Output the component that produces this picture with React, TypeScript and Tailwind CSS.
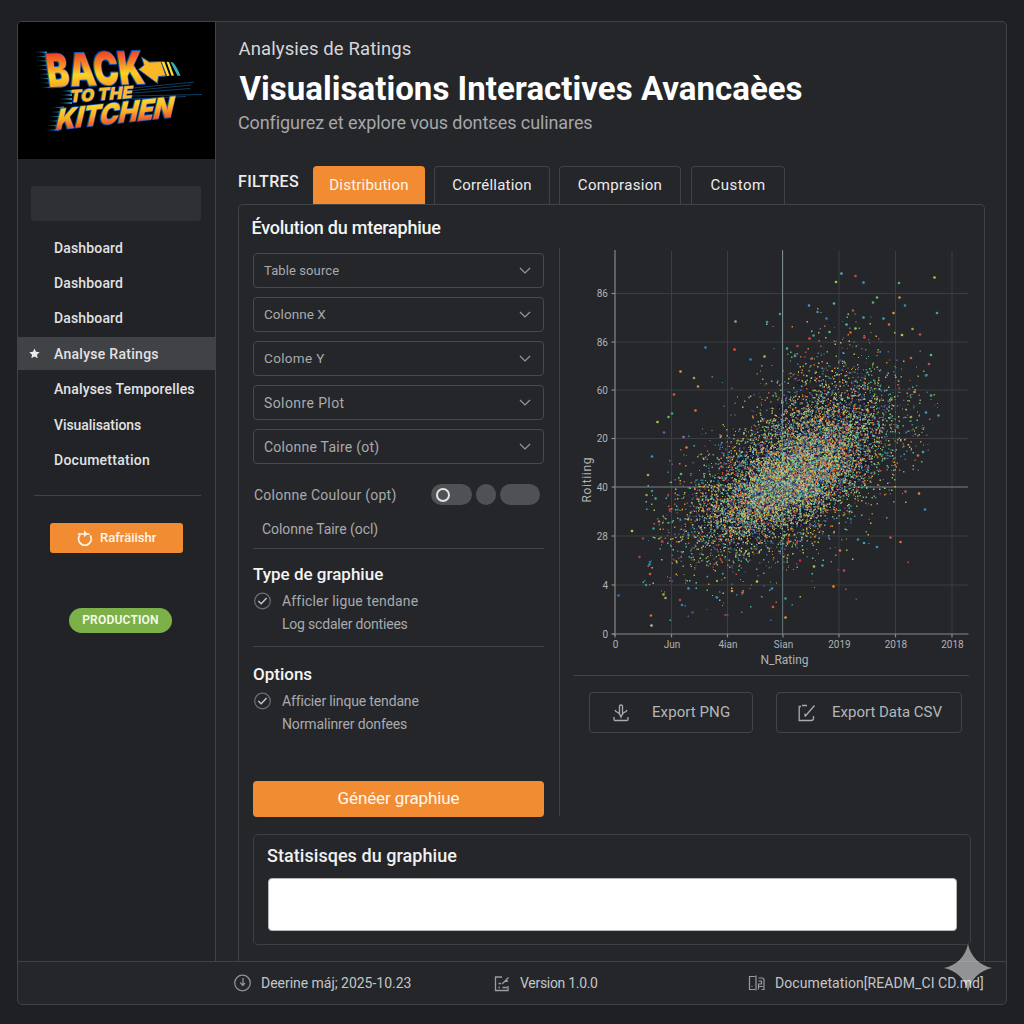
import type { ReactNode } from "react";

/* ---------- logo ---------- */

function Logo() {
  const leftLines = Array.from({ length: 9 }, (_, i) => i);
  return (
    <svg className="block h-[137px] w-[197px] bg-black" viewBox="18 22 197 137">
      <defs>
        <linearGradient id="fire" x1="0" y1="0" x2="0" y2="1">
          <stop offset="0.2" stopColor="#ee4427" />
          <stop offset="0.42" stopColor="#f98a23" />
          <stop offset="0.6" stopColor="#fdd326" />
          <stop offset="0.8" stopColor="#fba420" />
        </linearGradient>
        <linearGradient id="gold" x1="0" y1="0" x2="0" y2="1">
          <stop offset="0.2" stopColor="#fcd82c" />
          <stop offset="0.5" stopColor="#fbb024" />
          <stop offset="0.85" stopColor="#ee4a27" />
        </linearGradient>
        <linearGradient id="fade" x1="1" y1="0" x2="0" y2="0">
          <stop offset="0" stopColor="#2aa5cc" />
          <stop offset="1" stopColor="#0b4d80" stopOpacity="0.3" />
        </linearGradient>
      </defs>
      <g fill="url(#fade)">
        {leftLines.map((i) => (
          <path key={i} d={`M${33 + i * 0.9} ${52 + i * 4.4} L${47 + i * 0.7} ${51.4 + i * 4.4} L${47 + i * 0.7} ${53 + i * 4.4}z`} />
        ))}
        {leftLines.slice(0, 6).map((i) => (
          <path key={i} d={`M${51 - i * 1.3} ${107.5 + i * 4.5} L${64 - i} ${106.5 + i * 4.5} L${64 - i} ${108.5 + i * 4.5}z`} />
        ))}
        {leftLines.slice(0, 4).map((i) => (
          <path key={i} d={`M${60 - i} ${91 + i * 4} L72 ${90 + i * 4} L72 ${92 + i * 4}z`} />
        ))}
      </g>
      <g stroke="#134c78" strokeWidth="0.8">
        <path d="M133 88 L194 82 M133 90.500 L191 85 M133 93 L190 88.500 M131 96 L202 94.500 M131 99 L186 96.500" />
      </g>
      <g fontFamily="Inter, sans-serif" fontWeight="900" paintOrder="stroke" strokeLinejoin="round">
        <text x="0" y="0" fontSize="45" textLength="97" lengthAdjust="spacingAndGlyphs" fill="url(#fire)" stroke="#1157b8" strokeWidth="2.2" transform="matrix(1 -0.035 0.14 1 48.500 87)">
          BACK
        </text>
        <text x="0" y="0" fontSize="17" textLength="63" lengthAdjust="spacingAndGlyphs" fill="#fbb92b" stroke="#1157b8" strokeWidth="1.4" transform="matrix(1 -0.07 -0.16 1 69 102.500)">
          TO THE
        </text>
        <text x="0" y="0" fontSize="29" textLength="117" lengthAdjust="spacingAndGlyphs" fill="url(#gold)" stroke="#1157b8" strokeWidth="1.8" transform="matrix(1 -0.11 -0.24 1 54.500 130)">
          KITCHEN
        </text>
      </g>
      <path d="M141.500 57 L149.500 62 L161 61.500 L166 76 L158.500 76.500 L157.500 83.500 L138.500 69.500 L144 65z" fill="#fcb727" stroke="#1157b8" strokeWidth="1" />
      <path d="M161.500 61.500 L164.500 61.700 L169.500 75.800 L167 76z" fill="#fdd63a" />
      <path d="M166.500 61.800 L169 62 L174 75.600 L171.500 75.700z" fill="#fdd63a" />
      <path d="M170.500 62 L173 62.500 Q177 67 180.500 75.700 L177.500 75.700z" fill="#34b2bb" />
    </svg>
  );
}

/* ---------- scatter plot ---------- */

const PALETTE = [
  "#15122a", "#1a1726", "#3f9a92", "#59c0a0", "#8fc85a", "#e6c23f", "#ec9035",
  "#dc5a3f", "#4a76c0", "#7a5590", "#b5d48a", "#2f7f9f", "#ea6a3c", "#6fd0b4", "#c9d45a", "#24305e",
];

function makeRandom(seed: number) {
  let s = seed;
  return () => {
    s = (s + 0x6d2b79f5) | 0;
    let t = Math.imul(s ^ (s >>> 15), 1 | s);
    t = (t + Math.imul(t ^ (t >>> 7), 61 | t)) ^ t;
    return ((t ^ (t >>> 14)) >>> 0) / 4294967296;
  };
}

function buildCloud() {
  const rnd = makeRandom(20251023);
  const gauss = () => Math.sqrt(-2 * Math.log(rnd() + 1e-9)) * Math.cos(2 * Math.PI * rnd());
  const paths = PALETTE.map(() => "");
  let dark = "";
  // cx, cy, long-axis sigma, short-axis sigma, angle (deg), count
  const clusters = [
    [788, 477, 55, 26, -32, 8200],
    [783, 484, 34, 15, -28, 2400],
    [818, 434, 36, 30, -50, 2100],
    [786, 474, 64, 40, -40, 800],
    [845, 375, 30, 32, -45, 240],
  ];
  clusters.forEach(([cx, cy, a, b, deg, n], ci) => {
    const c = Math.cos((deg * Math.PI) / 180);
    const s = Math.sin((deg * Math.PI) / 180);
    for (let i = 0; i < n; i++) {
      const u = gauss() * a;
      const v = gauss() * b;
      const x = Math.round((cx + u * c - v * s) * 2) / 2;
      const y = Math.round((cy + u * s + v * c) * 2) / 2;
      if (x < 640 || x > 938 || y < 305 || y > 620) continue;
      const core = (u * u) / (a * a) + (v * v) / (b * b) < 3.6;
      if (ci < 3 && core && i % 2 === 0) dark += `M${x - 1.5} ${y - 1.5}h4v4h-4z`;
      const size = rnd() < 0.3 ? 1 : 1.5;
      let k = Math.floor(rnd() * PALETTE.length);
      if (!core && k < 2) k += 3;
      paths[k] += `M${x} ${y}h${size}v${size}h-${size}z`;
    }
  });
  return { dark, paths };
}

const CLOUD = buildCloud();

const OUTLIERS: [number, number, string][] = [
  [841.500, 273.500, "#4fb8a5"], [855.500, 276, "#c24a55"], [836, 282, "#9bd13f"], [863.500, 282.500, "#3f9ac9"],
  [934.500, 277.500, "#a9cf3f"], [899, 283, "#4fae6a"], [899.500, 297.500, "#e0913a"], [877, 297.500, "#5bc07a"],
  [873, 302.500, "#4fb56a"], [834, 303.500, "#4fb8a5"], [809, 305.500, "#4f8fd0"], [817.500, 312, "#4f80c0"],
  [853, 310.500, "#a8555f"], [905, 305.500, "#3a8fae"], [893.500, 313, "#d6993a"], [937, 313, "#45a09a"],
  [780, 314, "#3f8fc0"], [767, 322, "#2f8fc0"], [735.500, 321.500, "#6fc088"], [826.500, 318.500, "#2f80c0"],
  [863.500, 317.500, "#3aa5c0"], [883.500, 318.500, "#3aa5b0"], [846.500, 324.500, "#3fc09a"], [889, 324.500, "#e0663c"],
  [705.500, 347.500, "#2f80c8"], [734.500, 349.500, "#ee5a3c"], [764.500, 356.500, "#8ccf4a"], [750.500, 359.500, "#2f80c8"],
  [680.500, 371.500, "#ee9a2c"], [694, 378, "#6fc03f"], [698, 386.500, "#d6893a"], [674, 394.500, "#dd5a3a"],
  [672, 413.500, "#2fb86a"], [668.500, 417, "#5fc04a"], [657.500, 422, "#a9cf3f"], [695.500, 410.500, "#e0763c"],
  [664, 432.500, "#4a6fa0"], [683.500, 437, "#a05fd0"], [686.500, 447.500, "#e0763c"], [652, 456.500, "#3a90c0"],
  [648, 475, "#c09a5a"], [681, 474, "#3fc07a"], [809.500, 338.500, "#ee4a3c"], [813.500, 335.500, "#2fa0b0"],
  [829.500, 332, "#4fb87a"], [850.500, 332.500, "#ee5a3c"], [864.500, 337.500, "#d0454a"], [855.500, 328.500, "#8ccf4a"],
  [787, 348.500, "#2fb8a0"], [797.500, 346, "#b8404a"], [795, 356, "#3a9fb0"], [812, 358.500, "#e0553c"],
  [912.500, 329, "#a9a03f"], [920, 334.500, "#c0505a"], [902, 335, "#d0c03a"], [931, 355, "#3fc09a"],
  [911, 358, "#d0554a"], [929, 364, "#c0555a"], [926, 375.500, "#3a8fae"], [931, 395.500, "#3fb08a"],
  [914.500, 392, "#e0913a"], [926, 412.500, "#3a9fc0"], [938.500, 415.500, "#3aa08a"], [911, 417, "#a0a03f"],
  [923, 452, "#3a9fc0"], [918, 455.500, "#d0703a"], [919, 493.500, "#ee8a2c"], [925, 509.500, "#2f8fd0"],
  [905.500, 491.500, "#c0555a"], [900.500, 542, "#ee6a2c"], [890.500, 537.500, "#d0553a"], [877, 547, "#2f90b8"],
  [864, 543, "#3aa5b0"], [858, 539.500, "#3a90b0"], [840, 550.500, "#e0703a"], [844, 570.500, "#d0405a"],
  [833.500, 586.500, "#f08a2c"], [785.500, 598.500, "#2fa0a0"], [785.500, 617.500, "#ee9a2c"], [772, 588.500, "#2f8fd0"],
  [773, 607, "#e0553c"], [742.500, 592.500, "#e0663c"], [732, 591, "#ee8a2c"], [757, 581.500, "#b8d03f"],
  [717, 597.500, "#2f8fd0"], [688.500, 588.500, "#3a90c0"], [682, 605, "#2f80d0"], [692.500, 612.500, "#205fa0"],
  [680, 600, "#c04050"], [725.500, 615, "#a03a45"], [663.500, 594.500, "#a0b04a"], [665.500, 598, "#b0a05a"],
  [651, 615.500, "#e0663c"], [651.500, 625.500, "#c0c09a"], [646, 585, "#2f9a8a"], [618.500, 595.500, "#2f70c0"],
  [650, 574, "#d0505a"], [649.500, 564.500, "#2f8fd0"], [650, 562, "#2f70b0"], [639.500, 557, "#a0455a"],
  [632, 531, "#b8d03f"], [643, 538.500, "#a0405a"], [653.500, 528.500, "#3a9a9a"], [659, 521.500, "#d0705a"],
  [662, 541.500, "#d0453a"], [646.500, 495, "#8fa03f"], [652, 491, "#2f8a9a"], [655.500, 498.500, "#5f9a8a"],
  [670, 509.500, "#d0404a"], [814, 566.500, "#c0c03a"], [822.500, 565.500, "#3fa09a"], [800, 560.500, "#e0204a"],
];

function ScatterChart() {
  const xs: [number, string][] = [[615, "0"], [671.500, "Jun"], [727.500, "4ian"], [783, "Sian"], [839, "2019"], [895.500, "2018"], [952, "2018"]];
  const ys: [number, string][] = [[293.500, "86"], [342, "86"], [390, "60"], [438.500, "20"], [487, "40"], [536, "28"], [585, "4"], [634, "0"]];
  return (
    <svg className="block h-[427px] w-[424px]" viewBox="560 248 424 427">
      <g stroke="#3b3d41" strokeWidth="1">
        {xs.slice(1).map(([x], i) => <line key={i} x1={x} x2={x} y1="251" y2="634" />)}
        {ys.slice(0, 7).map(([y], i) => <line key={i} x1="615" x2="968" y1={y} y2={y} />)}
      </g>
      <line x1="615" x2="968" y1="487" y2="487" stroke="#75787a" />
      <path d={CLOUD.dark} fill="#17152a" fillOpacity="0.55" />
      {CLOUD.paths.map((d, i) => <path key={i} d={d} fill={PALETTE[i]} fillOpacity="0.86" />)}
      <ellipse cx="784" cy="486" rx="42" ry="20" transform="rotate(-25 784 486)" fill="#a9d0a0" fillOpacity="0.08" />
      {OUTLIERS.map(([x, y, c], i) => <circle key={i} cx={x} cy={y} r="1.3" fill={c} />)}
      <line x1="782.500" x2="782.500" y1="250" y2="425" stroke="#7c898c" strokeWidth="1" />
      <line x1="782.500" x2="782.500" y1="545" y2="634" stroke="#5c6c70" strokeWidth="1" />
      <line x1="782.500" x2="782.500" y1="425" y2="545" stroke="#8fb8ae" strokeOpacity="0.3" strokeWidth="1" />
      <g stroke="#85878a" strokeWidth="1.2">
        <line x1="615" x2="615" y1="250" y2="636" />
        <line x1="612" x2="968.500" y1="634" y2="634" />
        {xs.map(([x], i) => <line key={i} x1={x} x2={x} y1="634" y2="637.500" />)}
        {ys.map(([y], i) => <line key={i} x1="611.500" x2="615" y1={y} y2={y} />)}
      </g>
      <g fill="#b0b2b5" fontFamily="Roboto, sans-serif" fontSize="10">
        {xs.map(([x, t], i) => <text key={i} x={x + 0.5} y="648" textAnchor="middle">{t}</text>)}
        {ys.map(([y, t], i) => <text key={i} x="608" y={y + 3.500} textAnchor="end">{t}</text>)}
        <text x="784.500" y="663.500" textAnchor="middle" fontSize="12">N_Rating</text>
        <text transform="translate(590.500 480) rotate(-90)" textAnchor="middle" fontSize="12" textLength="45">Roitiing</text>
      </g>
    </svg>
  );
}

/* ---------- small pieces ---------- */

function CheckIcon() {
  return (
    <svg className="h-[18px] w-[18px]" viewBox="0 0 18 18" fill="none">
      <circle cx="9.500" cy="9" r="7.800" stroke="#6c6e72" strokeWidth="1.2" />
      <path d="M5.300 9 L8.200 11.800 L13.600 6" stroke="#c3c4c6" strokeWidth="1.500" />
    </svg>
  );
}

function Select({ label, text }: { label: string; text: string }) {
  return (
    <div className="flex h-[35px] items-center justify-between rounded-[4px] border border-[#47494d] pr-[12px] pl-[10px]">
      <span className={`text-[#a8aaad] ${text}`}>{label}</span>
      <svg className="h-[7px] w-[12px]" viewBox="0 0 12 7" fill="none">
        <path d="M1 1 L6 6 L11 1" stroke="#97999c" strokeWidth="1.200" />
      </svg>
    </div>
  );
}

function CheckGroup({ title, first, second, secondCls }: { title: string; first: ReactNode; second: ReactNode; secondCls: string }) {
  return (
    <>
      <h3 className="h-6 text-[17px] leading-6 font-[550] text-[#f4f4f5]">{title}</h3>
      <div className="mt-[3px] flex h-6 items-center text-sm text-[#a8aaad]">
        <CheckIcon />
        <span className="pl-[11px]">{first}</span>
      </div>
      <div className={`h-5 pl-[29px] text-sm leading-5 text-[#a8aaad] ${secondCls}`}>{second}</div>
    </>
  );
}

const NAV = [
  { label: "Dashboard", cls: "tracking-[0.15px]" },
  { label: "Dashboard", cls: "tracking-[0.15px]" },
  { label: "Dashboard", cls: "tracking-[0.15px]" },
  { label: "Analyse Ratings", cls: "tracking-[0.28px]", active: true },
  { label: "Analyses Temporelles", cls: "tracking-[0.16px]" },
  { label: "Visualisations", cls: "tracking-[-0.08px]" },
  { label: "Documettation", cls: "tracking-[0.25px]" },
];

function Sidebar() {
  return (
    <aside className="flex w-[198px] flex-col border-r border-[#414347] bg-[#222327]">
      <Logo />
      <div className="mt-[27px] mr-[14px] ml-[13px] h-[35px] rounded-[3px] bg-[#2f3034]" />
      <nav className="mt-[9px] flex flex-col">
        {NAV.map((n, i) => (
          <div key={i} className="flex h-[35.400px] items-center">
            <div className={n.active ? "flex h-[33px] w-full items-center bg-[#414246]" : "flex h-[33px] w-full items-center"}>
              <span className="flex w-[36px] pl-[11px]">
                {n.active && (
                  <svg className="h-[11px] w-[11px]" viewBox="0 0 24 24" fill="#ececed">
                    <path d="M12 1l3.300 7.400 8 .8-6 5.400 1.700 7.900-7-4.100-7 4.100 1.700-7.900-6-5.400 8-.8z" />
                  </svg>
                )}
              </span>
              <span className={`text-sm font-medium text-[#e1e2e3] ${n.cls}`}>{n.label}</span>
            </div>
          </div>
        ))}
      </nav>
      <div className="mt-[17px] mr-[14px] ml-4 h-px bg-[#404246]" />
      <button className="mt-[27px] ml-[32px] flex h-[30px] w-[133px] items-center rounded-[3px] bg-[#f28c33] pl-[27px]">
        <svg className="h-4 w-4" viewBox="0 0 16 16" fill="none" stroke="#fff3e6" strokeWidth="1.900">
          <path d="M3 5 A6.300 6.300 0 1 0 13.200 5.500" />
          <path d="M0.800 4 H12.500" strokeWidth="1.600" />
          <path d="M7 0.300 L10.500 3.800 L7 7.300z" fill="#fff3e6" stroke="none" />
        </svg>
        <span className="pl-[7px] text-[13px] font-[550] text-[#fff6ec]">Rafräiishr</span>
      </button>
      <span className="mt-[55px] ml-[51px] flex h-[25px] w-[103px] items-center justify-center rounded-full bg-[#7cb14a] text-xs font-semibold tracking-[0.2px] text-[#f5fbea]">
        PRODUCTION
      </span>
    </aside>
  );
}

function Tabs() {
  const base = "flex h-[38px] items-center justify-center rounded-t-[4px] text-[15px] font-[450]";
  const idle = "border border-b-0 border-[#404246] pb-px text-[#ececed]";
  return (
    <div className="mt-[31px] flex h-[38px]">
      <span className="flex w-[75px] items-center pb-[6px] text-base font-[550] tracking-[0.35px] text-[#ececed]">FILTRES</span>
      <span className={`w-[112px] bg-[#f28c33] tracking-[0.2px] text-[#fff6ec] ${base}`}>Distribution</span>
      <span className={`ml-[9px] w-[116px] tracking-[0.2px] ${base} ${idle}`}>Corréllation</span>
      <span className={`ml-[9px] w-[122px] tracking-[0.33px] ${base} ${idle}`}>Comprasion</span>
      <span className={`ml-[10px] w-[94px] tracking-[0.5px] ${base} ${idle}`}>Custom</span>
    </div>
  );
}

function FilterForm() {
  return (
    <div className="w-[320px] pr-[15px] pl-[14px]">
      <h2 className="mt-[11px] -ml-[1.500px] h-6 text-lg leading-6 font-[550] tracking-[-0.250px] text-[#f4f4f5]">Évolution du mteraphiue</h2>
      <div className="mt-[13px] flex flex-col gap-[9px]">
        <Select label="Table source" text="text-[13px] tracking-[0.1px]" />
        <Select label="Colonne X" text="text-[13.500px] tracking-[0.050px]" />
        <Select label="Colome Y" text="text-[13.500px] tracking-[0.350px]" />
        <Select label="Solonre Plot" text="text-sm tracking-[0.400px]" />
        <Select label="Colonne Taire (ot)" text="text-sm tracking-[0.25px]" />
      </div>
      <div className="mt-[20px] flex h-[21px] items-center">
        <span className="w-[178px] pl-[1px] text-sm tracking-[0.26px] text-[#a8aaad]">Colonne Coulour (opt)</span>
        <span className="flex h-[21px] w-[41px] items-center rounded-full bg-[#505155] pl-[5px]">
          <span className="h-[14px] w-[14px] rounded-full border-2 border-[#e2e3e4]" />
        </span>
        <span className="ml-[4px] h-[21px] w-[20px] rounded-full bg-[#505155]" />
        <span className="ml-[4px] h-[21px] w-[40px] rounded-full bg-[#505155]" />
      </div>
      <div className="mt-[14px] h-5 pl-[9px] text-sm leading-5 tracking-[-0.050px] text-[#a8aaad]">Colonne Taire (ocl)</div>
      <div className="mt-[9px] mb-[13px] h-px bg-[#424448]" />
      <CheckGroup
        title="Type de graphiue"
        first={<span className="tracking-[0.18px]">Afficler ligue tendane</span>}
        second={<span className="tracking-[-0.2px]">Log scdaler dontiees</span>}
        secondCls="mt-[1px]"
      />
      <div className="mt-[12px] mb-[15px] h-px bg-[#424448]" />
      <CheckGroup
        title="Options"
        first={<span className="tracking-[-0.15px]">Afficier linque tendane</span>}
        second={<span className="tracking-[-0.14px]">Normalinrer donfees</span>}
        secondCls="mt-[1px]"
      />
      <button className="mt-[47px] flex h-[36px] w-[291px] items-center justify-center rounded-[4px] bg-[#f28c33] text-[17px] font-[450] tracking-[-0.12px] text-[#fff6ec]">
        Généer graphiue
      </button>
    </div>
  );
}

function ExportButtons() {
  const base = "flex h-[41px] items-center rounded-[4px] border border-[#424448] text-[15px] text-[#b4b6b9]";
  return (
    <div className="mt-[16px] ml-[29px] flex gap-[23px]">
      <button className={`w-[164px] pl-[23px] ${base}`}>
        <svg className="h-[18px] w-[16px]" viewBox="0 0 16 18" fill="none" stroke="#a9abae" strokeWidth="1.300">
          <path d="M6.500 11 V2 Q6.500 1 8 1 Q9.500 1 9.500 2 V11 M2 6 Q3 8.500 5 8.500 Q7 10 8 13 Q9 10 11 8.500 Q13 8.500 14 6" />
          <path d="M1 13 V15.500 Q1 16.500 2 16.500 H14 Q15 16.500 15 15.500 V13" />
        </svg>
        <span className="pl-[23px] tracking-[0.08px]">Export PNG</span>
      </button>
      <button className={`w-[186px] pl-[21px] ${base}`}>
        <svg className="h-[18px] w-[18px]" viewBox="0 0 18 18" fill="none" stroke="#a9abae" strokeWidth="1.300">
          <path d="M9 1.500 H4 M3 2.500 H1.200 V16.500 H13 Q15.500 16.500 15.500 14.500 V12 M16.500 1.500 L7 12.500 M7 9.500 V12.500" />
        </svg>
        <span className="pl-[16px]">Export Data CSV</span>
      </button>
    </div>
  );
}

function Footer() {
  return (
    <footer className="flex h-[43px] items-center border-t border-[#404246] text-sm text-[#c3c5c7]">
      <div className="ml-[216px] flex w-[259px] items-center">
        <svg className="h-[18px] w-[18px]" viewBox="0 0 18 18" fill="none" stroke="#8f9194" strokeWidth="1.300">
          <circle cx="8.500" cy="9" r="7.800" />
          <path d="M9 4 V11.500 M6.300 8.500 L8.800 11.500 L11 9" />
        </svg>
        <span className="pl-[9px] tracking-[-0.03px]">Deerine máj; 2025-10.23</span>
      </div>
      <div className="flex w-[255px] items-center">
        <svg className="h-[17px] w-[17px]" viewBox="0 0 17 17" fill="none" stroke="#9a9c9f" strokeWidth="1.300">
          <path d="M9 2 H2.500 V15.500 H15 V11 M15.500 2.500 L9 9 M11.500 6.500 L15 6 M5.500 8.500 H8 M5.500 12.500 H7 M14 12.500 H9.500" />
        </svg>
        <span className="pl-[10px] tracking-[-0.3px]">Version 1.0.0</span>
      </div>
      <div className="flex items-center">
        <svg className="h-[16px] w-[18px]" viewBox="0 0 18 16" fill="none" stroke="#9a9c9f" strokeWidth="1.200">
          <path d="M7 1.500 H1.500 V14.500 H7 M8 0.500 V15.500 M10.500 3 H14 Q16 3 16 5 V14.500 H13.500 M10.500 6 H13.500 V9 H10.500 V14.500 M10.500 11.500 H15 M3.500 11.500 H4.500" />
        </svg>
        <span className="pl-[9px] tracking-[0.080px]">Documetation[READM_CI CD.md]</span>
      </div>
    </footer>
  );
}

export default function App() {
  return (
    <div className="relative h-[1024px] w-[1024px] overflow-hidden bg-[#1f2024] pt-[21px] pl-[17px] font-['Roboto',sans-serif] whitespace-nowrap">
      <div className="flex h-[984px] w-[990px] flex-col overflow-hidden rounded-[5px] border border-[#404246] bg-[#25262a]">
        <div className="flex flex-1">
          <Sidebar />
          <main className="flex flex-1 flex-col pr-[20px] pl-[22px]">
            <div className="mt-[15px] h-6 pl-[0.500px] text-[18.500px] leading-6 tracking-[0.120px] text-[#d6d7d9]">Analysies de Ratings</div>
            <h1 className="mt-2 h-10 pl-[1.500px] text-[33px] leading-10 font-bold tracking-[0.030px] text-white">Visualisations Interactives Avancaèes</h1>
            <p className="mt-[2px] h-6 text-lg leading-6 tracking-[-0.1px] text-[#a5a7aa]">Configurez et explore vous dontεes culinares</p>
            <Tabs />
            <section className="w-[747px] flex-1 rounded-t-[5px] border border-b-0 border-[#404246]">
              <div className="flex h-[612px]">
                <FilterForm />
                <div className="mt-[43px] h-[568px] w-[425px] border-l border-[#404246]">
                  <ScatterChart />
                  <div className="ml-[14px] h-px w-[395px] bg-[#424448]" />
                  <ExportButtons />
                </div>
              </div>
              <div className="mt-[17px] ml-[14px] h-[111px] w-[718px] rounded-[5px] border border-[#3d3f43] pl-[14px]">
                <h2 className="mt-[9px] -ml-px h-6 text-lg leading-6 font-[550] tracking-[0.050px] text-[#f0f0f1]">Statisisqes du graphiue</h2>
                <div className="mt-[10px] h-[53px] w-[689px] rounded-[4px] border border-[#b5b6b8] bg-white" />
              </div>
            </section>
          </main>
        </div>
        <Footer />
      </div>
      <svg className="absolute top-[944px] left-[944px] h-[48px] w-[48px]" viewBox="0 0 48 48">
        <path d="M24 0 C27 13 35 21 48 24 C35 27 27 35 24 48 C21 35 13 27 0 24 C13 21 21 13 24 0z" fill="#ffffff" fillOpacity="0.5" />
      </svg>
    </div>
  );
}
